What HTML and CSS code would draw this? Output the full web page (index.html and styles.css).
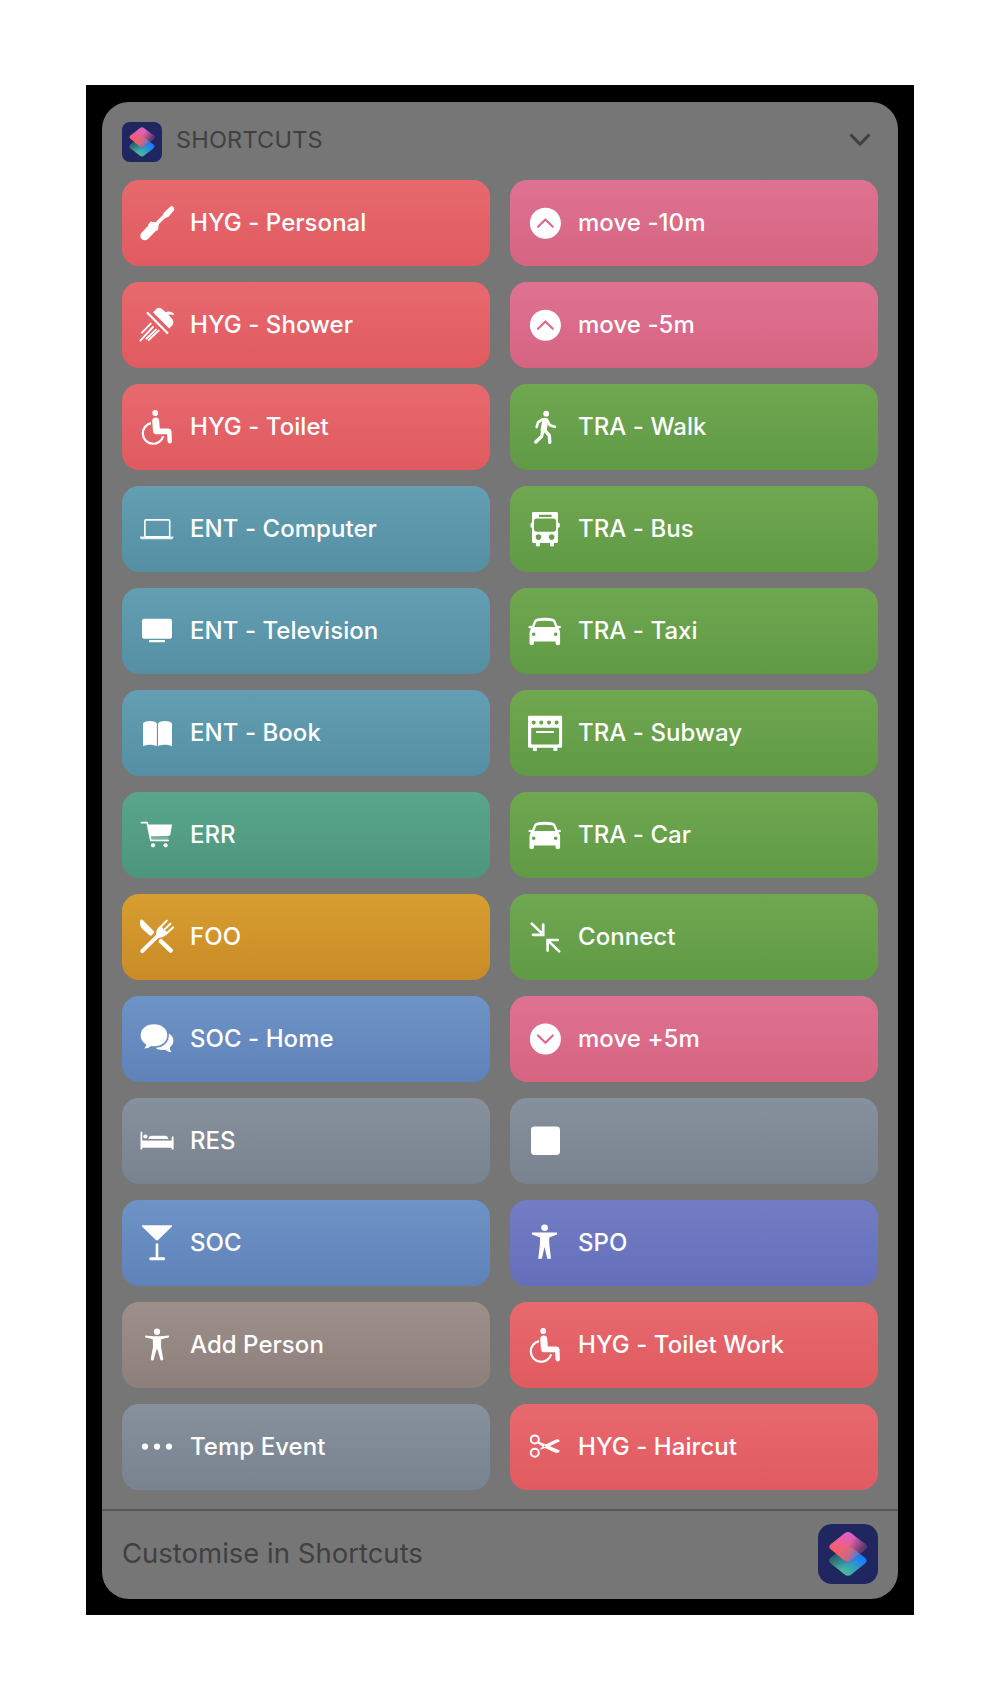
FILE: index.html
```html
<!DOCTYPE html>
<html lang="en-GB">
<head>
<meta charset="utf-8">
<title>Shortcuts widget</title>
<link rel="stylesheet" href="styles.css">
</head>
<body>
<svg class="defs" aria-hidden="true">
  <defs>
    <linearGradient id="warm" x1="0.15" y1="0.85" x2="0.6" y2="0.1">
      <stop offset="0" stop-color="#ff6250"/><stop offset="0.45" stop-color="#ee5f80"/><stop offset="1" stop-color="#dc5fc6"/>
    </linearGradient>
    <linearGradient id="warmShade" x1="0.55" y1="0.35" x2="0.98" y2="0.55">
      <stop offset="0" stop-color="#4a3568" stop-opacity="0"/><stop offset="1" stop-color="#40305f" stop-opacity="0.95"/>
    </linearGradient>
    <linearGradient id="cool" x1="0.3" y1="0.9" x2="0.85" y2="0.4">
      <stop offset="0" stop-color="#50bd92"/><stop offset="0.5" stop-color="#36a0bd"/><stop offset="1" stop-color="#187dff"/>
    </linearGradient>
    <linearGradient id="coolShade" x1="0.05" y1="0.35" x2="0.4" y2="0.75">
      <stop offset="0" stop-color="#27505f" stop-opacity="0.9"/><stop offset="1" stop-color="#27505f" stop-opacity="0"/>
    </linearGradient>
    <linearGradient id="fold" x1="0.1" y1="0.35" x2="0.95" y2="0.65">
      <stop offset="0" stop-color="#f4626a"/><stop offset="0.5" stop-color="#cf6684"/><stop offset="1" stop-color="#3f7fe2"/>
    </linearGradient>
    <symbol id="logo" viewBox="0 0 60 60">
      <path fill="url(#cool)" d="M26.6 23.2Q30 20.8 33.4 23.2L47 33.8Q50.4 36.7 47 39.6L33.4 50.4Q30 53 26.6 50.4L13 39.6Q9.6 36.7 13 33.8Z"/>
      <path fill="url(#coolShade)" d="M26.6 23.2Q30 20.8 33.4 23.2L47 33.8Q50.4 36.7 47 39.6L33.4 50.4Q30 53 26.6 50.4L13 39.6Q9.6 36.7 13 33.8Z"/>
      <path fill="url(#warm)" d="M26.6 9.2Q30 6.6 33.4 9.2L47 19.9Q50.4 22.7 47 25.6L33.4 36.4Q30 38.9 26.6 36.4L13 25.6Q9.6 22.7 13 19.9Z"/>
      <path fill="url(#warmShade)" d="M26.6 9.2Q30 6.6 33.4 9.2L47 19.9Q50.4 22.7 47 25.6L33.4 36.4Q30 38.9 26.6 36.4L13 25.6Q9.6 22.7 13 19.9Z"/>
      <path fill="url(#fold)" d="M26.6 23.2Q30 20.8 33.4 23.2L41.7 29.8L33.4 36.4Q30 38.9 26.6 36.4L18.3 29.8Z"/>
    </symbol>
    <symbol id="i-driver" viewBox="0 0 40 40">
      <path d="M7.8 32.8L16.6 23.6" stroke="#fff" stroke-width="9" stroke-linecap="round"/>
      <path d="M13.5 18.5L21.8 20.5L21.2 26.8L17 29L11 22Z"/>
      <path d="M19 21.5L30 10.5" stroke="#fff" stroke-width="3.8"/>
      <path d="M26.8 9.8L33.4 3.6Q34.5 2.6 36 3.6L37 5Q37.8 6.4 36.8 7.5L31.6 13.8L27.4 15.2L25.6 13.4Z"/>
    </symbol>
    <symbol id="i-shower" viewBox="0 0 40 40">
      <path d="M16 7.3L19.8 3.4Q22.5 1.8 25 4L28.6 7.2Q32.5 5.4 37 8.4L36.6 10.2Q33.6 8.8 31.4 9.8L35 13.8Q37.4 17 35.4 20.2L32.2 23.4Z"/>
      <path d="M10.6 7.9L30.4 28" stroke="#fff" stroke-width="2.1" stroke-linecap="round"/>
      <path d="M13.8 18.6L5 27.6M16 22L3.4 35.6M19 24.6L9.4 33.6M21.6 25.6L11.6 35" stroke="#fff" stroke-width="1.9" stroke-linecap="round"/>
    </symbol>
    <symbol id="i-wheelchair" viewBox="0 0 40 40">
      <circle cx="18.2" cy="6" r="2.9"/>
      <path d="M15.2 14Q15.3 10.4 18.6 10.4Q21.9 10.4 22.2 13.6L22.8 21.4H31.6Q34.3 21.6 34.5 24.2L34.9 34.6Q34.7 36.6 32.8 36.6Q30.8 36.6 30.6 34.6L30 27.3H18.6Q16.2 27.2 16 24.6Z"/>
      <path d="M14 16.2A10.4 10.4 0 1 0 26.2 29.2" fill="none" stroke="#fff" stroke-width="2.2"/>
    </symbol>
    <symbol id="i-laptop" viewBox="0 0 40 40">
      <rect x="7.9" y="10.9" width="24.8" height="17" rx="1" fill="none" stroke="#fff" stroke-width="1.6"/>
      <path d="M3 27.6H36.3V28.8Q36 30.2 34.5 30.2H4.8Q3.2 30.2 3 28.8Z" fill-opacity=".85"/>
    </symbol>
    <symbol id="i-tv" viewBox="0 0 40 40"><rect x="5" y="7.7" width="30" height="20" rx="2"/><rect x="12" y="29" width="16" height="2.3" rx=".6"/></symbol>
    <symbol id="i-book" viewBox="0 0 40 40">
      <path d="M19.9 10.4C17.4 7.4 9.2 7.4 6 10.2V33.2C9.5 31.2 16.5 31.2 19.9 33.2Z"/>
      <path d="M21 10.4C23.6 7.4 31.8 7.4 35 10.2V33.2C31.5 31.2 24.5 31.2 21 33.2Z"/>
    </symbol>
    <symbol id="i-cart" viewBox="0 0 40 40">
      <path d="M4.4 7.6H10.2L13.8 25.4H31.2" fill="none" stroke="#fff" stroke-width="1.6" stroke-linecap="round" stroke-linejoin="round"/>
      <path d="M10.4 9.6H35L33.4 19.2Q33 20.8 31.4 21L12.6 21.4Z"/>
      <path d="M12.8 22.8L31.5 22.4V23.2L13 23.6Z" fill-opacity=".6"/>
      <circle cx="16" cy="30.3" r="2.1"/><circle cx="28.6" cy="30.3" r="2.1"/>
    </symbol>
    <symbol id="i-cutlery" viewBox="0 0 40 40">
      <path d="M3 4.2Q3.6 1.6 6 3.2L16.6 14Q17.8 15.2 16.4 16.6L14.8 18.2Q13.4 19.2 12.2 18L5 11.4Q2.6 9 3 4.2Z"/>
      <path d="M23.8 24.2L33.8 33.6" stroke="#fff" stroke-width="4.4" stroke-linecap="round"/>
      <path d="M5.2 34.2L22 17.6" stroke="#fff" stroke-width="3.8" stroke-linecap="round"/>
      <path d="M29.8 3.6L22.4 11.2M33.4 6.8L25.6 14.4M36 10.4L28.6 17.2" stroke="#fff" stroke-width="2" stroke-linecap="round"/>
      <path d="M24 8.8Q19 11.6 19.4 15.2L18.8 18.6L21.2 21L25 20.2Q28.6 19.4 31.2 15.6L28.2 13.8L26 13.6L26 11.4Z"/>
    </symbol>
    <symbol id="i-chat" viewBox="0 0 40 40">
      <path d="M17 5.3C9.2 5.3 3.7 10 3.7 16.3C3.7 20.4 5.9 23.7 9.3 25.4C9.2 27 8.2 28.6 6.7 29.6C9.8 29.6 12.4 28.8 14.2 27.1C23.6 28.3 30.3 23.5 30.3 16.3C30.3 10 24.8 5.3 17 5.3Z"/>
      <path d="M31.8 14.4C34.8 16 36.4 18.6 36.4 21.6C36.4 24.6 35 26.9 32.8 28.6C32.9 30.4 33.4 31.8 34.4 33.1C31.8 33 29.8 32.2 28.4 30.7C24.4 31.5 20.8 30.8 18.4 28.8C26.4 28.4 32.8 23 31.8 14.4Z"/>
    </symbol>
    <symbol id="i-bed" viewBox="0 0 40 40">
      <path d="M3.5 11.2Q4.4 9.6 5.3 11.2V18.9H34.7V16Q35.7 14.4 36.6 16V28Q35.7 29.4 34.7 28V26.7H5.3V28Q4.4 29.4 3.5 28Z"/>
      <path d="M5.3 19.3H34.7" stroke="#838c97" stroke-width=".7"/>
      <circle cx="8.4" cy="15.5" r="2.1"/><path d="M11.5 18V16.8Q12.5 14.8 14.5 14.7H28.5Q30.8 14.9 31.4 18Z"/>
    </symbol>
    <symbol id="i-martini" viewBox="0 0 40 40"><path d="M5 2.2H35V3.4L21.4 16.8Q20 18 18.6 16.8L5 3.4Z"/><path d="M18.7 20.5H21.3V34.3H27Q28 34.4 28 35.8T27 37.3H13.2Q12.3 37.2 12.3 35.8T13.2 34.3H18.7Z"/></symbol>
    <symbol id="i-person" viewBox="0 0 40 40">
      <circle cx="20" cy="6.7" r="3.1"/>
      <path d="M8.3 10.4L16.6 11.2H23.4L31.7 10.4Q32.6 11.8 31.5 12.6L24.2 14.2L24 21.8L26.3 34.6Q25.2 36.2 23.6 35.2L20.5 24.6H19.5L16.5 35.2Q14.8 36.2 13.7 34.6L16 21.8L15.8 14.2L8.5 12.6Q7.4 11.8 8.3 10.4Z"/>
    </symbol>
    <symbol id="i-dots" viewBox="0 0 40 40"><circle cx="8" cy="19.6" r="3.1"/><circle cx="20" cy="19.6" r="3.1"/><circle cx="32" cy="19.6" r="3.1"/></symbol>
    <symbol id="i-up" viewBox="0 0 40 40"><circle cx="20.4" cy="20.2" r="15.5"/><path d="M13 23.8L20.4 16.4L27.8 23.8" fill="none" stroke="#db6989" stroke-width="2.1" stroke-linecap="round" stroke-linejoin="round"/></symbol>
    <symbol id="i-down" viewBox="0 0 40 40"><circle cx="20.4" cy="20" r="15.5"/><path d="M13 16.4L20.4 23.8L27.8 16.4" fill="none" stroke="#db6989" stroke-width="2.1" stroke-linecap="round" stroke-linejoin="round"/></symbol>
    <symbol id="i-walk" viewBox="0 0 40 40">
      <circle cx="21.2" cy="6.7" r="2.9"/>
      <path d="M15.6 12.2Q18.6 10 21.8 11Q23.4 11.6 23 14L21.9 22.8L17 25L15.4 23.4L17 15Z"/>
      <g fill="none" stroke="#fff" stroke-linecap="round" stroke-linejoin="round">
        <path d="M17.4 12.4L13.2 15.2L11.6 20M22.2 13.2L24.8 18.2L29.9 19.8" stroke-width="2.6"/>
        <path d="M18 23L16.6 29.4L10.8 35M19.4 23L24.3 28.4L24.8 35.3" stroke-width="3.4"/>
      </g>
    </symbol>
    <symbol id="i-bus" viewBox="0 0 40 40">
      <path fill-rule="evenodd" d="M8.4 3.1H31.6Q33 3.1 33 4.5V13.8H33.8Q34.9 14.1 34.9 16.2T33.8 18.8H33V32.6Q33 33.9 31.6 33.9H29V36.5Q29 37.6 27 37.6T25 36.5V33.9H14.9V36.5Q14.9 37.6 12.9 37.6T10.9 36.5V33.9H8.4Q7 33.9 7 32.6V18.8H6.4Q5.4 18.4 5.4 16.2T6.4 13.8H7V4.5Q7 3.1 8.4 3.1ZM14 5.8V7.9H26.6V5.8ZM12 9.6Q9 9.6 9 12.4V20Q9 22.8 12 22.8H28.2Q31.1 22.8 31.1 20V12.4Q31.1 9.6 28.2 9.6ZM13.5 25.3A2.8 2.8 0 1 0 13.5 30.9A2.8 2.8 0 1 0 13.5 25.3ZM26.6 25.3A2.8 2.8 0 1 0 26.6 30.9A2.8 2.8 0 1 0 26.6 25.3Z"/>
    </symbol>
    <symbol id="i-car" viewBox="0 0 40 40">
      <path fill-rule="evenodd" d="M12.4 7.4Q20 6.2 27.2 7.4Q29.6 7.9 30.4 9.8L32.6 15L35 14.7Q36.2 15 36 16.8L33.6 17.6Q35.1 19.4 35.1 21.6V32.4Q35 34.2 32.8 34.2T30.6 32.4V30.5H8.9V32.4Q8.8 34.2 6.6 34.2T4.5 32.4V21.6Q4.5 19.4 6 17.6L3.4 16.8Q3.2 15 4.6 14.7L7 15L9.2 9.8Q10 7.9 12.4 7.4ZM12.4 10.3Q11.4 10.5 11 11.6L9.3 15.9H30.3L28.6 11.6Q28.2 10.5 27.2 10.3Q20 9.4 12.4 10.3ZM8.7 21.4A1.8 1.8 0 1 0 8.7 25A1.8 1.8 0 1 0 8.7 21.4ZM30.7 21.4A1.8 1.8 0 1 0 30.7 25A1.8 1.8 0 1 0 30.7 21.4Z"/>
    </symbol>
    <symbol id="i-oven" viewBox="0 0 40 40">
      <path fill-rule="evenodd" d="M4.2 2.7H36Q37.1 2.7 37.1 3.9V33.5Q37.1 34.7 36 34.7H32.3V37.9H28.4V34.7H11.8V37.9H7.9V34.7H4.2Q3 34.7 3 33.5V3.9Q3 2.7 4.2 2.7ZM7.2 14.8Q6.2 14.8 6.2 15.8V30.4Q6.2 31.4 7.2 31.4H33Q34 31.4 34 30.4V15.8Q34 14.8 33 14.8ZM11 18H28.8V20H11ZM8.7 7.5A2.1 2.1 0 1 0 8.7 11.7A2.1 2.1 0 1 0 8.7 7.5ZM16.3 7.5A2.1 2.1 0 1 0 16.3 11.7A2.1 2.1 0 1 0 16.3 7.5ZM24 7.5A2.1 2.1 0 1 0 24 11.7A2.1 2.1 0 1 0 24 7.5ZM31.6 7.5A2.1 2.1 0 1 0 31.6 11.7A2.1 2.1 0 1 0 31.6 7.5Z"/>
    </symbol>
    <symbol id="i-connect" viewBox="0 0 40 40">
      <path d="M6.8 6.6L18 17.4M18.2 7.6V17.8H8M34.2 34.4L22.8 23.4M22.6 33.6V23H32.8" fill="none" stroke="#fff" stroke-width="2.7" stroke-linecap="round"/>
    </symbol>
    <symbol id="i-stop" viewBox="0 0 40 40"><rect x="6" y="5.5" width="29" height="28.5" rx="3.4"/></symbol>
    <symbol id="i-sport" viewBox="0 0 40 40">
      <circle cx="19.6" cy="4.8" r="3.3"/>
      <path d="M7 9.6H32.1V11.4L24.2 14.4L24.3 21L26 35.7H22.3L19.6 24L16.9 35.7H13.2L15 21L15.1 14.4L7 11.4Z"/>
    </symbol>
    <symbol id="i-scissors" viewBox="0 0 40 40">
      <g fill="none" stroke="#fff" stroke-width="2"><circle cx="9.8" cy="12.4" r="4"/><circle cx="9.8" cy="25.8" r="4"/></g>
      <path d="M13 14.2L22 17.9L34.8 23.6Q34.4 26.4 31 25.9L19 20.6L12.6 16.2Z"/>
      <path d="M13 24L19 18.2L31 12.4Q34.4 11.4 34.8 14.2L22 20.6L12.8 23.2Z"/>
      <circle cx="19.6" cy="19.2" r=".8" fill="#e4656a"/>
    </symbol>
  </defs>
</svg>
<main class="screen">
  <section class="widget">
    <header class="head">
      <svg class="logo-small"><use href="#logo"/></svg>
      <h1 class="title">SHORTCUTS</h1>
      <svg class="chevron" viewBox="0 0 24 16"><path d="M3.4 3.4L12 12.2L20.6 3.4"/></svg>
    </header>
    <div class="grid">
      <div class="tile red"><svg class="icon"><use href="#i-driver"/></svg><span>HYG - Personal</span></div>
      <div class="tile pink"><svg class="icon"><use href="#i-up"/></svg><span>move -10m</span></div>
      <div class="tile red"><svg class="icon"><use href="#i-shower"/></svg><span>HYG - Shower</span></div>
      <div class="tile pink"><svg class="icon"><use href="#i-up"/></svg><span>move -5m</span></div>
      <div class="tile red"><svg class="icon"><use href="#i-wheelchair"/></svg><span>HYG - Toilet</span></div>
      <div class="tile green"><svg class="icon"><use href="#i-walk"/></svg><span>TRA - Walk</span></div>
      <div class="tile teal"><svg class="icon"><use href="#i-laptop"/></svg><span>ENT - Computer</span></div>
      <div class="tile green"><svg class="icon"><use href="#i-bus"/></svg><span>TRA - Bus</span></div>
      <div class="tile teal"><svg class="icon"><use href="#i-tv"/></svg><span>ENT - Television</span></div>
      <div class="tile green"><svg class="icon"><use href="#i-car"/></svg><span>TRA - Taxi</span></div>
      <div class="tile teal"><svg class="icon"><use href="#i-book"/></svg><span>ENT - Book</span></div>
      <div class="tile green"><svg class="icon"><use href="#i-oven"/></svg><span>TRA - Subway</span></div>
      <div class="tile mint"><svg class="icon"><use href="#i-cart"/></svg><span>ERR</span></div>
      <div class="tile green"><svg class="icon"><use href="#i-car"/></svg><span>TRA - Car</span></div>
      <div class="tile amber"><svg class="icon"><use href="#i-cutlery"/></svg><span>FOO</span></div>
      <div class="tile green"><svg class="icon"><use href="#i-connect"/></svg><span>Connect</span></div>
      <div class="tile blue"><svg class="icon"><use href="#i-chat"/></svg><span>SOC - Home</span></div>
      <div class="tile pink"><svg class="icon"><use href="#i-down"/></svg><span>move +5m</span></div>
      <div class="tile slate"><svg class="icon"><use href="#i-bed"/></svg><span>RES</span></div>
      <div class="tile slate"><svg class="icon"><use href="#i-stop"/></svg></div>
      <div class="tile blue"><svg class="icon"><use href="#i-martini"/></svg><span>SOC</span></div>
      <div class="tile indigo"><svg class="icon"><use href="#i-sport"/></svg><span>SPO</span></div>
      <div class="tile taupe"><svg class="icon"><use href="#i-person"/></svg><span>Add Person</span></div>
      <div class="tile red"><svg class="icon"><use href="#i-wheelchair"/></svg><span>HYG - Toilet Work</span></div>
      <div class="tile slate"><svg class="icon"><use href="#i-dots"/></svg><span>Temp Event</span></div>
      <div class="tile red"><svg class="icon"><use href="#i-scissors"/></svg><span>HYG - Haircut</span></div>
    </div>
    <footer class="foot">
      <span class="customise">Customise in Shortcuts</span>
      <svg class="logo-large"><use href="#logo"/></svg>
    </footer>
  </section>
</main>
</body>
</html>
```
FILE: styles.css
```css
* { box-sizing: border-box; }
body {
  margin: 0;
  padding: 85px 86px;
  background: #fff;
  font-family: Inter, "Liberation Sans", sans-serif;
}
.defs { position: absolute; width: 0; height: 0; }
.screen { height: 1530px; padding: 16.5px 16px; background: #000; }
.widget {
  height: 1497.5px;
  border-radius: 27px;
  background: #767676;
  overflow: hidden;
}
.head {
  display: flex;
  align-items: center;
  height: 78px;
  padding: 2px 20px 0;
}
.logo-small { width: 40px; height: 40px; border-radius: 8px; background: #20265f; }
.title {
  flex: 1;
  margin: 0 0 4px 14px;
  font-size: 23.5px;
  font-weight: 400;
  line-height: 30px;
  letter-spacing: 0.2px;
  color: #404040;
}
.chevron { width: 24px; height: 16px; margin: 0 6px 4px 0; fill: none; stroke: #404040; stroke-width: 3; stroke-linecap: round; stroke-linejoin: round; }
.grid {
  display: grid;
  grid-template-columns: 368px 368px;
  grid-auto-rows: 86px;
  gap: 16.02px 20px;
  padding: 0 20px 19px;
}
.tile {
  display: flex;
  align-items: center;
  gap: 13px;
  padding-left: 15px;
  border-radius: 17px;
  color: #fff;
  font-size: 24px;
  font-weight: 450;
  letter-spacing: 0.05px;
  white-space: nowrap;
}
.icon { width: 40px; height: 40px; fill: #fff; }
.red { background: linear-gradient(#e7696e, #e05b60); }
.pink { background: linear-gradient(#df7292, #d66481); }
.green { background: linear-gradient(#70a751, #609a45); }
.teal { background: linear-gradient(#639eb2, #548fa4); }
.mint { background: linear-gradient(#59a68b, #4d967e); }
.amber { background: linear-gradient(#d79e30, #ca8b27); }
.blue { background: linear-gradient(#6e93c6, #5f83b9); }
.slate { background: linear-gradient(#87919d, #78838f); }
.indigo { background: linear-gradient(#737dc5, #656eb9); }
.taupe { background: linear-gradient(#9d8f8a, #8d7f7b); }
.foot {
  display: flex;
  align-items: center;
  justify-content: space-between;
  height: 90px;
  padding: 0 20px 1px;
  border-top: 2px solid #555;
}
.customise { margin-bottom: 2px; font-size: 27.5px; line-height: 36px; letter-spacing: 0; color: #404040; }
.logo-large { width: 60px; height: 60px; border-radius: 14px; background: #20265f; }
```
